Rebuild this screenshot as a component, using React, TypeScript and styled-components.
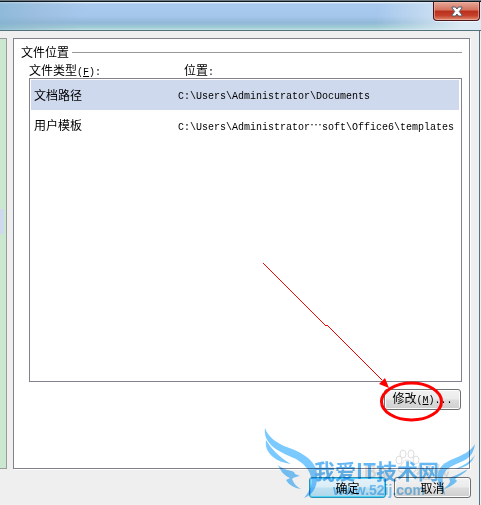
import React from "react";
import styled, { createGlobalStyle } from "styled-components";

const GlobalStyle = createGlobalStyle`
  * { box-sizing: border-box; }
  body {
    margin: 0;
    overflow: hidden;
    color: #000;
    font: 12px/14px "Noto Sans CJK SC", sans-serif;
  }
`;

const Window = styled.div`
  display: flex;
  flex-direction: column;
  min-height: 100vh;
  border-top: 1px solid #6d7983;
  background: #efefef;
`;

const TitleBar = styled.header`
  display: flex;
  justify-content: flex-end;
  align-items: flex-start;
  height: 30px;
  padding-right: 1px;
  border-top: 1px solid #10171f;
  border-bottom: 1px solid #53717c;
  background:
    linear-gradient(100deg, #7fb0cc99 0%, #8fb3ce66 8%, #8fb3ce00 18%, #dbe9f400 78%, #dbe9f4 96%),
    linear-gradient(180deg, #f4f9fd 0, #a9caee 2px, #a5c7ec 50%, #91b8d8 74%, #a2ced4 92%, #c5e2e6 100%);
`;

const CloseButton = styled.button`
  display: flex;
  align-items: center;
  justify-content: center;
  width: 47px;
  height: 19px;
  padding: 0;
  border: 1px solid #49141a;
  border-top: 0;
  border-radius: 0 0 4px 4px;
  background: linear-gradient(180deg, #e6a898 0, #d5725f 45%, #b92f1b 50%, #c5402a 75%, #e08a70 100%);
  box-shadow: inset 0 0 0 1px #f0b9ab99, 0 1px 0 #ffffff99;
`;

const Client = styled.div`
  display: flex;
  flex-direction: column;
  flex: 1;
  padding: 7px 9px 7px 0;
  border-right: 1px solid #4f7683;
  margin-right: 1px;
`;

const Columns = styled.div`
  display: flex;
  flex: 1;
  gap: 6px;
`;

const Nav = styled.nav`
  width: 7px;
  padding-top: 170px;
  border: 1px solid #9b9b9b;
  border-left: 0;
  background: #cbe7cf;
`;

const NavSelection = styled.div`
  width: 4px;
  height: 25px;
  background: #cfd9ed;
`;

const Panel = styled.main`
  display: flex;
  flex: 1;
  flex-direction: column;
  min-width: 0;
  padding: 6px 7px 0;
  border: 1px solid #82828f;
  background: #fff;
  box-shadow: 1px 1px 0 #fff;
`;

const GroupTitle = styled.h1`
  display: flex;
  align-items: center;
  gap: 3px;
  margin: 0;
  font-size: 12px;
  font-weight: 400;
  line-height: 14px;

  &::after {
    content: "";
    flex: 1;
    height: 1px;
    background: #989898;
  }
`;

const Group = styled.section`
  display: flex;
  flex: 1;
  flex-direction: column;
  padding-left: 8px;
`;

const Headings = styled.div`
  display: grid;
  grid-template-columns: 155px 1fr;
  height: 19px;
  padding-top: 2px;
  line-height: 17px;
`;

const ListFrame = styled.div`
  display: flex;
  flex: 1;
  margin-bottom: 7px;
  padding: 1px 2px 1px 1px;
  border: 1px solid #82828f;
`;

const ListTable = styled.table`
  width: 100%;
  height: 60px;
  border-collapse: collapse;
  table-layout: fixed;
`;

const Row = styled.tr<{ $selected?: boolean }>`
  height: 30px;
  background: ${(p) => (p.$selected ? "#cfd9ed" : "transparent")};
`;

const NameCell = styled.td`
  width: 147px;
  padding: 0 0 0 3px;
`;

const PathCell = styled.td`
  padding: 3px 0 0;
  font-family: "Liberation Mono", monospace;
  font-size: 10px;
  white-space: nowrap;
`;

const Ellipsis = styled.span`
  font-family: "Noto Sans CJK SC", sans-serif;
  font-size: 12px;
  line-height: 12px;
`;

const Latin = styled.span`
  font-family: "Liberation Mono", monospace;
  font-size: 10px;
`;

const Actions = styled.div`
  position: relative;
  align-self: flex-end;
  padding: 0 1px 58px 0;
`;

const Button = styled.button<{ $primary?: boolean }>`
  width: 77px;
  height: 21px;
  padding: 0 7px;
  border: 1px solid ${(p) => (p.$primary ? "#2c93b8" : "#707070")};
  border-radius: 3px;
  background: ${(p) =>
    p.$primary
      ? "linear-gradient(180deg, #e6f2f8 0, #d9edf7 48%, #bfe0f0 52%, #add7ea 100%)"
      : "linear-gradient(180deg, #f2f2f2 0, #ebebeb 48%, #dddddd 52%, #cfcfcf 100%)"};
  box-shadow: inset 0 0 0 1px ${(p) => (p.$primary ? "#4fd0f5" : "#fcfcfc")};
  color: #000;
  font: inherit;
  white-space: nowrap;
`;

const Footer = styled.footer`
  position: relative;
  display: flex;
  justify-content: flex-end;
  gap: 8px;
  padding-top: 8px;
  margin-right: -1px;
`;

const Annotation = styled.svg`
  position: absolute;
  top: -127px;
  right: 18px;
  pointer-events: none;
`;

const Watermark = styled.svg`
  position: absolute;
  right: -7px;
  bottom: -4px;
  mix-blend-mode: multiply;
  pointer-events: none;
`;

export default function App() {
  return (
    <Window lang="zh-CN">
      <GlobalStyle />
      <TitleBar>
        <CloseButton aria-label="关闭">
          <svg width="12" height="11" viewBox="0 0 12 11">
            <path d="M1 1h3.500L6 3l1.500-2H11v1L8.300 5.500 11 9v1H7.500L6 8l-1.500 2H1V9l2.700-3.500L1 2Z" fill="#fff" stroke="#535a68" />
          </svg>
        </CloseButton>
      </TitleBar>
      <Client>
        <Columns>
          <Nav aria-label="选项">
            <NavSelection />
          </Nav>
          <Panel>
            <GroupTitle>文件位置</GroupTitle>
            <Group>
              <Headings>
                <span>文件类型<Latin>(<u>F</u>):</Latin></span>
                <span>位置<Latin>:</Latin></span>
              </Headings>
              <ListFrame>
                <ListTable>
                  <tbody>
                    <Row $selected>
                      <NameCell>文档路径</NameCell>
                      <PathCell>C:\Users\Administrator\Documents</PathCell>
                    </Row>
                    <Row>
                      <NameCell>用户模板</NameCell>
                      <PathCell>C:\Users\Administrator<Ellipsis>…</Ellipsis>soft\Office6\templates</PathCell>
                    </Row>
                  </tbody>
                </ListTable>
              </ListFrame>
              <Actions>
                <Button>修改<Latin>(<u>M</u>)...</Latin></Button>
                <Annotation width="184" height="164" viewBox="260 262 184 164" aria-hidden="true">
                  <path d="M263 263 325 325H327L382 380" fill="none" stroke="#f00" shapeRendering="crispEdges" />
                  <path d="M379 384 385 378 389 388Z" fill="#f00" />
                  <ellipse cx="411.500" cy="401.500" rx="30" ry="18.500" fill="none" stroke="#f00" strokeWidth="3" />
                </Annotation>
              </Actions>
            </Group>
          </Panel>
        </Columns>
        <Footer>
          <Button $primary>确定</Button>
          <Button>取消</Button>
          <Watermark width="216" height="76" viewBox="262 427 216 76" aria-hidden="true">
            <g fill="none" stroke="#dcdcdc">
              <ellipse cx="399" cy="461" rx="3" ry="4" />
              <ellipse cx="403" cy="455" rx="3" ry="4" />
              <ellipse cx="411" cy="455" rx="3" ry="4" />
              <ellipse cx="416" cy="461" rx="3" ry="4" />
              <path d="M407 461c5 0 5 5 8 8 2 5-3 5-8 4-5 1-10 0-8-4 3-3 4-8 8-8Z" />
            </g>
            <text x="364" y="479" fill="#e2e2e2" fontSize="18" fontWeight="700" fontFamily="Liberation Sans">Bai</text>
            <text x="416" y="479" fill="#e2e2e2" fontSize="17" fontWeight="700" fontFamily="Noto Sans CJK SC">经验</text>
            <g fill="#7ac9ff">
              <path d="M265 429C268 438 276 443 284 447C293 450 302 454 308 459C315 465 318 472 317 481C316 490 312 496 304 499C309 493 313 486 311 478C309 470 304 465 296 460C287 456 277 452 271 446C266 441 264 435 265 429Z" />
              <path d="M266 441C270 448 277 455 282 459C286 462 288 463 291 465C284 464 278 462 273 458C267 453 265 447 266 441Z" />
              <path d="M278 466C284 471 290 471 294 473L295 475L300 477C296 478 294 478 292 480C294 485 297 488 301 490C294 489 289 486 286 481L290 479C284 477 280 471 278 466Z" />
              <path d="M475 445C474 453 470 459 463 462C454 466 448 468 445 473C441 478 443 485 445 496C439 490 437 484 438 475C439 468 445 463 453 460C463 456 471 452 475 445Z" />
              <path d="M475 456C472 464 466 469 455 470C463 467 470 463 475 456Z" />
              <path d="M468 470C463 476 458 477 455 480L457 482C453 486 450 488 444 490C448 486 450 484 450 482L449 479C455 477 461 474 468 470Z" />
            </g>
            <text x="314" y="480" fill="#65b8f3" fontSize="21" fontWeight="700" fontFamily="Noto Sans CJK SC">我爱IT技术网</text>
            <text x="333" y="496" fill="#86caf5" fontSize="14" fontWeight="700" fontFamily="Liberation Sans">www.52ij.com</text>
          </Watermark>
        </Footer>
      </Client>
    </Window>
  );
}
